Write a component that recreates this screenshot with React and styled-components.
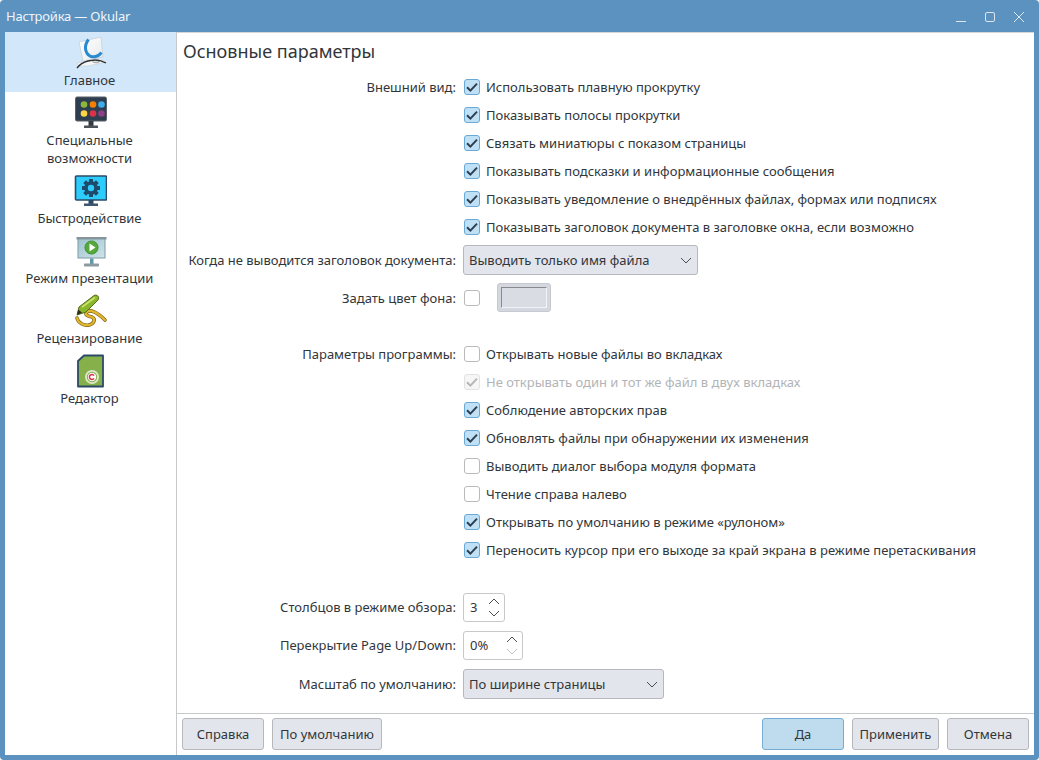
import React from 'react';
import styled, { createGlobalStyle } from 'styled-components';

const GlobalStyle = createGlobalStyle`
  html, body {
    margin: 0;
    padding: 0;
    background: #fff;
  }
  body {
    font-family: "Noto Sans", "Open Sans", sans-serif;
    font-size: 13px;
    color: #31363b;
  }
`;

const OkularIcon = () => (
  <svg width="34" height="34" viewBox="0 0 34 34">
    <defs>
      <linearGradient id="paper" x1="0" y1="0" x2="1" y2="1">
        <stop offset="0" stopColor="#fff" />
        <stop offset="1" stopColor="#e6eaee" />
      </linearGradient>
    </defs>
    <path d="M5 6 L27 1 L29 21 L9 25 Z" fill="url(#paper)" stroke="#c6cbd1" strokeWidth="0.7" />
    <path d="M3 27 L14 25 L27 24 L32 26 L14 30 L5 30 Z" fill="#f4f5f6" stroke="#c9ccd0" strokeWidth="0.6" />
    <path d="M14.5 3.5 C9.5 10 11 18 17 20.5 C21 21.5 25 19.5 27.5 16.5" fill="none" stroke="#2a8ad0" strokeWidth="3" />
    <ellipse cx="22" cy="25" rx="3.5" ry="1.8" fill="#dfe2e5" stroke="#77797b" strokeWidth="0.6" />
    <path d="M3 32 C6 28 10 26 14 25 C20 23.5 27 24 32 27" fill="none" stroke="#2c2e30" strokeWidth="1.3" />
  </svg>
);

const AccessIcon = () => {
  const dots = [
    [11, 8.5, '#8cb63c'], [20, 8.5, '#f67e00'], [28.5, 8.5, '#3daee9'],
    [11, 17.5, '#fdd443'], [20, 17.5, '#da3246'], [28.5, 17.5, '#8e3e84'],
  ];
  return (
    <svg width="34" height="34" viewBox="0 0 34 34" style={{ marginLeft: -1 }}>
      <rect x="2.5" y="1" width="31" height="24" rx="1.5" fill="#2c3e50" stroke="#5b6166" strokeWidth="1" />
      {dots.map(([x, y, c]) => <circle key={c} cx={x} cy={y} r="3.3" fill={c} />)}
      <rect x="15.5" y="25" width="5" height="5" fill="#333a41" />
      <rect x="11" y="29.5" width="14" height="2.5" rx="0.5" fill="#4d5258" />
    </svg>
  );
};

const SpeedIcon = () => (
  <svg width="34" height="34" viewBox="0 0 34 34" style={{ marginLeft: -1 }}>
    <rect x="2.5" y="2" width="31" height="24" rx="1" fill="#2ccdfd" stroke="#2c4a68" strokeWidth="1.6" />
    <g fill="#1e4a6c">
      <circle cx="18" cy="14" r="6.8" />
      {[0, 45, 90, 135].map(a => (
        <rect key={a} x="16" y="5" width="4" height="18" rx="0.5" transform={`rotate(${a} 18 14)`} />
      ))}
    </g>
    <circle cx="18" cy="14" r="3.2" fill="#2ccdfd" />
    <rect x="15.5" y="26" width="5" height="4" fill="#2c4a68" />
    <rect x="11" y="29.5" width="14" height="2.5" fill="#3e566e" />
  </svg>
);

const PresentationIcon = () => (
  <svg width="34" height="34" viewBox="0 0 34 34">
    <defs>
      <linearGradient id="screen" x1="0" y1="0" x2="1" y2="1">
        <stop offset="0" stopColor="#9fc4cf" />
        <stop offset="1" stopColor="#cfe3ea" />
      </linearGradient>
    </defs>
    <g transform="translate(1 2)">
      <rect x="1.5" y="1" width="30" height="2.5" fill="#8a9296" />
      <rect x="3" y="3" width="27" height="19" fill="url(#screen)" stroke="#7f9aa3" strokeWidth="1" />
      <circle cx="16.5" cy="11.5" r="6.6" fill="#55a83a" stroke="#3f8a2a" strokeWidth="0.8" />
      <path d="M14.5 7.5 L20.5 11.5 L14.5 15.5 Z" fill="#fff" />
      <rect x="15" y="22.5" width="3.5" height="7" fill="#5e97ad" />
      <rect x="9" y="27.5" width="15" height="3" rx="0.8" fill="#8d9a9f" />
    </g>
  </svg>
);

const inkPath = 'M3 24 C4 29 10 32 15 31 C20 30 22 25 18 23 C14 22 10 21 13 18 C16 15 23 18 31 26';

const ReviewIcon = () => (
  <svg width="34" height="34" viewBox="0 0 34 34">
    <path d={inkPath} fill="none" stroke="#7a6418" strokeWidth="3.6" strokeLinecap="round" />
    <path d={inkPath} fill="none" stroke="#e3b52c" strokeWidth="2.2" strokeLinecap="round" />
    <path d="M3 21 L5 13 L20 1.5 C23 0 26 3 24 6 L12 18 Z" fill="#8ab62c" stroke="#566f1a" strokeWidth="1" />
    <path d="M8 13 L21 3.5" stroke="#c9e36a" strokeWidth="1.6" />
    <path d="M3 21 L4.4 15.5 L8 18.8 Z" fill="#2d2f1a" />
  </svg>
);

const EditorIcon = () => (
  <svg width="34" height="34" viewBox="0 0 34 34">
    <path d="M10 1.5 L29 1.5 L29 32.5 L4 32.5 L4 7 Z" fill="#86b04a" stroke="#2c4a68" strokeWidth="1.8" strokeLinejoin="round" />
    <circle cx="18" cy="23" r="7" fill="#dfe8cf" />
    <circle cx="18" cy="23" r="5.2" fill="#86b04a" />
    <circle cx="18" cy="23" r="4.2" fill="#fff" />
    <path d="M20 21.6 A2.5 2.5 0 1 0 20 24.4" fill="none" stroke="#da3246" strokeWidth="1.5" />
  </svg>
);

const CheckMark = () => (
  <svg width="12" height="12" viewBox="0 0 12 12">
    <path d="M1 6.2 L4.4 9.6 L11 2.6" fill="none" stroke="currentColor" strokeWidth="2" />
  </svg>
);

const Chevron = ({ up, faded }) => (
  <svg width="12" height="7" viewBox="0 0 12 7" opacity={faded ? 0.35 : 1}>
    <path d={up ? 'M1 6 L6 1 L11 6' : 'M1 1 L6 6 L11 1'} fill="none" stroke="#4d4d4d" strokeWidth="1" />
  </svg>
);

const sections = [
  { label: 'Главное', icon: <OkularIcon />, active: true },
  { label: 'Специальные возможности', icon: <AccessIcon /> },
  { label: 'Быстродействие', icon: <SpeedIcon /> },
  { label: 'Режим презентации', icon: <PresentationIcon /> },
  { label: 'Рецензирование', icon: <ReviewIcon /> },
  { label: 'Редактор', icon: <EditorIcon /> },
];

const appearance = [
  ['Использовать плавную прокрутку', true],
  ['Показывать полосы прокрутки', true],
  ['Связать миниатюры с показом страницы', true],
  ['Показывать подсказки и информационные сообщения', true],
  ['Показывать уведомление о внедрённых файлах, формах или подписях', true],
  ['Показывать заголовок документа в заголовке окна, если возможно', true],
];

const program = [
  ['Открывать новые файлы во вкладках', false],
  ['Не открывать один и тот же файл в двух вкладках', true, true],
  ['Соблюдение авторских прав', true],
  ['Обновлять файлы при обнаружении их изменения', true],
  ['Выводить диалог выбора модуля формата', false],
  ['Чтение справа налево', false],
  ['Открывать по умолчанию в режиме «рулоном»', true],
  ['Переносить курсор при его выходе за край экрана в режиме перетаскивания', true],
];

const CheckRows = ({ title, items }) => items.map(([text, checked, disabled], i) => (
  <Row key={text} $height={28}>
    <Label>{i === 0 ? title : ''}</Label>
    <Check $checked={checked} $disabled={disabled} text={text} />
  </Row>
));

const Check = ({ text, $checked, $disabled }) => (
  <CheckLine $disabled={$disabled}>
    <Box $checked={$checked} $disabled={$disabled}>{$checked && <CheckMark />}</Box>
    {text}
  </CheckLine>
);

const Spin = ({ value, width, downFaded }) => (
  <SpinBox $width={width}>
    <SpinValue>{value}</SpinValue>
    <SpinArrows>
      <Chevron up />
      <Chevron faded={downFaded} />
    </SpinArrows>
  </SpinBox>
);

export default function App() {
  return (
    <>
      <GlobalStyle />
      <Window>
        <TitleBar>
          <WindowTitle>Настройка — Okular</WindowTitle>
          <WindowButtons>
            <svg width="12" height="12" viewBox="0 0 12 12"><path d="M1 10.5 H11" stroke="#dfe6ee" strokeWidth="1" /></svg>
            <svg width="12" height="12" viewBox="0 0 12 12"><rect x="1.5" y="1.5" width="9" height="9" rx="1.5" fill="none" stroke="#dfe6ee" /></svg>
            <svg width="12" height="12" viewBox="0 0 12 12"><path d="M1 1 L11 11 M11 1 L1 11" stroke="#dfe6ee" /></svg>
          </WindowButtons>
        </TitleBar>
        <Body>
          <Sidebar>
            {sections.map(s => (
              <NavItem key={s.label} $active={s.active}>
                <NavIcon>{s.icon}</NavIcon>
                <NavLabel>{s.label}</NavLabel>
              </NavItem>
            ))}
          </Sidebar>
          <Content>
            <Heading>Основные параметры</Heading>
            <Form>
              <CheckRows title="Внешний вид:" items={appearance} />
              <Row $height={30} $top={4}>
                <Label>Когда не выводится заголовок документа:</Label>
                <Select $width={235}>
                  Выводить только имя файла
                  <Chevron />
                </Select>
              </Row>
              <Row $height={29} $top={8}>
                <Label>Задать цвет фона:</Label>
                <ColorLine>
                  <Box />
                  <ColorButton><ColorSwatch /></ColorButton>
                </ColorLine>
              </Row>
              <Row $height={0} $top={28} />
              <CheckRows title="Параметры программы:" items={program} />
              <Row $height={29} $top={29}>
                <Label $raised>Столбцов в режиме обзора:</Label>
                <Spin value="3" width={42} />
              </Row>
              <Row $height={29} $top={9}>
                <Label $raised>Перекрытие Page Up/Down:</Label>
                <Spin value="0%" width={60} downFaded />
              </Row>
              <Row $height={29} $top={9}>
                <Label $raised>Масштаб по умолчанию:</Label>
                <Select $width={201}>
                  По ширине страницы
                  <Chevron />
                </Select>
              </Row>
            </Form>
            <Footer>
              <Button $width={82}>Справка</Button>
              <Button $width={110}>По умолчанию</Button>
              <FooterSpacer />
              <Button $width={82} $primary>Да</Button>
              <Button $width={87}>Применить</Button>
              <Button $width={82}>Отмена</Button>
            </Footer>
          </Content>
        </Body>
      </Window>
    </>
  );
}

const Window = styled.div`
  width: 1039px;
  height: 760px;
  box-sizing: border-box;
  display: flex;
  flex-direction: column;
  padding: 0 5px 5px;
  background: #5b92c0;
  border-radius: 4px;
  overflow: hidden;
`;

const TitleBar = styled.div`
  height: 32px;
  flex: none;
  display: flex;
  align-items: center;
  justify-content: space-between;
  padding: 0 9px 0 1px;
  color: #eff4f8;
`;

const WindowTitle = styled.span`
  letter-spacing: -0.2px;
`;

const WindowButtons = styled.div`
  display: flex;
  align-items: center;
  gap: 17px;
  margin-top: 2px;
`;

const Body = styled.div`
  flex: 1;
  min-height: 0;
  display: flex;
  background: #fff;
`;

const Sidebar = styled.nav`
  width: 172px;
  box-sizing: border-box;
  flex: none;
  border-right: 1px solid #c6c8ca;
  background: #fff;
`;

const NavItem = styled.div`
  display: flex;
  flex-direction: column;
  align-items: center;
  padding: 4px 0 3px;
  background: ${({ $active }) => ($active ? '#d2e7f9' : 'transparent')};
`;

const NavIcon = styled.div`
  width: 34px;
  height: 34px;
  margin-bottom: 1px;
`;

const NavLabel = styled.div`
  width: 130px;
  margin-right: 2px;
  text-align: center;
  line-height: 18px;
`;

const Content = styled.main`
  flex: 1;
  min-width: 0;
  display: flex;
  flex-direction: column;
  border-top: 1px solid #d4d6d9;
`;

const Heading = styled.h1`
  margin: 0;
  padding: 5px 6px 0;
  height: 40px;
  box-sizing: border-box;
  font-size: 18px;
  font-weight: 400;
  line-height: 27px;
`;

const Form = styled.div`
  flex: 1;
  min-height: 0;
`;

const Row = styled.div`
  display: grid;
  grid-template-columns: 279px 1fr;
  column-gap: 7px;
  align-items: center;
  height: ${({ $height }) => $height}px;
  margin-top: ${({ $top = 0 }) => $top}px;
`;

const Label = styled.div`
  text-align: right;
  white-space: nowrap;
  margin-bottom: ${({ $raised }) => ($raised ? 1 : 0)}px;
`;

const CheckLine = styled.label`
  display: flex;
  align-items: center;
  gap: 6px;
  white-space: nowrap;
  color: ${({ $disabled }) => ($disabled ? '#b2b4b6' : 'inherit')};
`;

const Box = styled.span`
  width: 16px;
  height: 16px;
  box-sizing: border-box;
  margin-left: 1px;
  flex: none;
  display: flex;
  align-items: center;
  justify-content: center;
  border-radius: 3px;
  border: 1px solid ${({ $checked, $disabled }) => ($disabled ? '#e2e3e4' : $checked ? '#6aa9d6' : '#b9babc')};
  background: ${({ $checked, $disabled }) => ($disabled ? '#f6f6f6' : $checked ? '#bfe0f5' : '#fff')};
  color: ${({ $disabled }) => ($disabled ? '#b5b6b8' : '#2d3f50')};
`;

const Select = styled.div`
  width: ${({ $width }) => $width}px;
  height: 30px;
  box-sizing: border-box;
  display: flex;
  align-items: center;
  justify-content: space-between;
  padding: 0 5px;
  border: 1px solid #b6b8bc;
  border-radius: 3px;
  background: #e3e5ec;
`;

const ColorLine = styled.div`
  display: flex;
  align-items: center;
  gap: 17px;
`;

const ColorButton = styled.div`
  width: 54px;
  height: 29px;
  box-sizing: border-box;
  padding: 3px;
  border-radius: 3px;
  background: #d4d6e0;
  border: 1px solid #c6c8d2;
`;

const ColorSwatch = styled.div`
  height: 100%;
  box-sizing: border-box;
  background: #dadce4;
  border: 1px solid;
  border-color: #8a8a8c #f4f4f6 #f4f4f6 #8a8a8c;
`;

const SpinBox = styled.div`
  width: ${({ $width }) => $width}px;
  height: 29px;
  box-sizing: border-box;
  display: flex;
  align-items: center;
  justify-content: space-between;
  padding: 0 4px 0 6px;
  border: 1px solid #c6c8ca;
  border-radius: 3px;
  background: #fff;
`;

const SpinValue = styled.span`
  margin-bottom: 1px;
`;

const SpinArrows = styled.div`
  display: flex;
  flex-direction: column;
  gap: 5px;
`;

const Footer = styled.div`
  height: 42px;
  flex: none;
  box-sizing: border-box;
  display: flex;
  gap: 8px;
  padding: 4px 5px 5px;
  border-top: 1px solid #c6c8ca;
`;

const FooterSpacer = styled.div`
  flex: 1;
`;

const Button = styled.div`
  width: ${({ $width }) => $width}px;
  height: 32px;
  box-sizing: border-box;
  display: flex;
  align-items: center;
  justify-content: center;
  border-radius: 3px;
  border: 1px solid ${({ $primary }) => ($primary ? '#76acd3' : '#b6b8bc')};
  background: ${({ $primary }) => ($primary ? '#bfdbee' : '#e3e5ec')};
`;
